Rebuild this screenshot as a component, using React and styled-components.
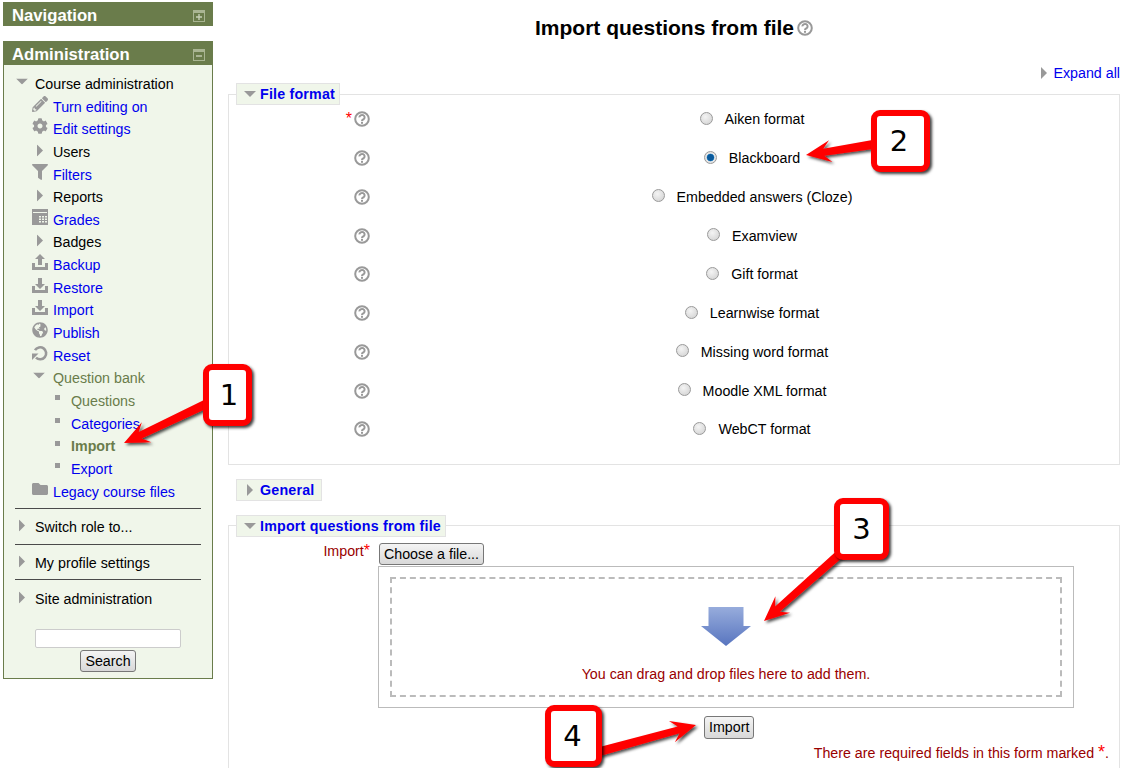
import { styled, createGlobalStyle } from 'styled-components';
import { FaCog, FaFilter, FaFolder, FaGlobeAmericas, FaPencilAlt } from 'react-icons/fa';

const GlobalStyle = createGlobalStyle`
  html, body {
    margin: 0;
    padding: 0;
    background: #fff;
    overflow: hidden;
  }
  body {
    font-family: "Liberation Sans", Arial, sans-serif;
    font-size: 14.25px;
    color: #000;
  }
`;

const Page = styled.div`
  position: relative;
  display: flex;
  align-items: flex-start;
  width: 1122px;
  height: 768px;
  overflow: hidden;
`;

const Sidebar = styled.aside`
  flex: none;
  width: 210px;
  margin: 2px 0 0 3px;
`;

const Block = styled.section`
  margin-bottom: 15px;
`;

const BlockHeader = styled.h2`
  box-sizing: border-box;
  display: flex;
  align-items: center;
  justify-content: space-between;
  height: 24px;
  margin: 0;
  padding: 4px 8px 0 9px;
  background: #6a7c4b;
  color: #fff;
  font-size: 16.7px;
  font-weight: bold;
`;

const BoxIcon = styled.svg`
  width: 12px;
  height: 12px;
`;

const BlockBody = styled.div`
  box-sizing: border-box;
  height: 614px;
  padding: 7.7px 11px 0 11px;
  background: #f0f6ea;
  border: 1px solid #6a7c4b;
  border-top: none;
`;

const Row = styled.div`
  box-sizing: border-box;
  display: flex;
  align-items: center;
  height: 22.65px;
  padding-left: ${({ $indent }) => $indent}px;
  padding-bottom: ${({ $raise }) => $raise || 0}px;
  color: ${({ $muted }) => ($muted ? '#6a7c4b' : '#000')};
  font-weight: ${({ $bold }) => ($bold ? 'bold' : 'normal')};
  white-space: nowrap;
`;

const IconSlot = styled.span`
  flex: none;
  display: flex;
  box-sizing: border-box;
  width: ${({ $width }) => $width}px;
  padding-left: ${({ $pad }) => $pad || 0}px;
  color: #999;
  transform: translateY(${({ $lift }) => -($lift ?? 3)}px);
`;

const TreeLink = styled.a`
  color: #0000ee;
  text-decoration: none;
`;

const Divider = styled.hr`
  height: 1px;
  margin: 4.7px 0 7.65px;
  border: none;
  background: #4a4a4a;
`;

const SearchForm = styled.form`
  display: flex;
  flex-direction: column;
  align-items: center;
  gap: 2px;
  margin-top: 18px;
`;

const SearchInput = styled.input`
  box-sizing: border-box;
  width: 146px;
  height: 19px;
  background: #fff;
  border: 1px solid #ccc;
  border-radius: 2px;
`;

const Button = styled.button`
  box-sizing: border-box;
  height: ${({ $height }) => $height || 22}px;
  padding: 0 4px;
  background: linear-gradient(#f4f4f4, #d8d8d8);
  border: 1px solid #777;
  border-radius: 3px;
  color: #000;
  font-family: inherit;
  font-size: 14.25px;
`;

const Main = styled.main`
  flex: none;
  width: 892px;
  margin-left: 15px;
`;

const Title = styled.h1`
  display: flex;
  align-items: center;
  justify-content: center;
  gap: 3px;
  height: 26px;
  margin: 15px 0 0;
  font-size: 21px;
  font-weight: bold;
`;

const ExpandRow = styled.div`
  display: flex;
  align-items: center;
  justify-content: flex-end;
  gap: 6px;
  height: 18px;
  margin-top: 23px;
`;

const Fieldset = styled.fieldset`
  margin: ${({ $top }) => $top}px 0 0;
  padding: 0;
  min-width: 0;
  border: 1px solid #e3e3e3;
  border-bottom: ${({ $open }) => ($open ? '1px solid #e3e3e3' : 'none')};
`;

const Legend = styled.legend`
  display: flex;
  align-items: center;
  box-sizing: border-box;
  height: 22px;
  margin-left: 7px;
  padding: 0 4px 0 7px;
  background: #f0f6ea;
  border: 1px solid #e3e3e3;
  color: #0000ee;
  font-size: 14.25px;
  font-weight: bold;
  letter-spacing: 0.2px;
`;

const LegendIcon = styled.span`
  display: flex;
  box-sizing: border-box;
  width: 16px;
  padding-left: ${({ $pad }) => $pad || 0}px;
`;

const GeneralLegend = styled(Legend)`
  margin: 0;
  padding-right: 7px;
`;

const GeneralBar = styled.div`
  display: flex;
  margin: 14px 0 0 8px;
`;

const FormatList = styled.div`
  margin-top: -5px;
  padding-bottom: 15px;
`;

const FormatRow = styled.div`
  display: grid;
  grid-template-columns: 141px 1fr;
  align-items: center;
  height: 38.75px;
`;

const HelpCell = styled.div`
  display: flex;
  align-items: center;
  justify-content: flex-end;
  gap: 2px;
`;

const RedStar = styled.span`
  color: #f00;
  font-size: ${({ $size }) => $size || 16}px;
  line-height: 1;
`;

const OptionCell = styled.label`
  display: flex;
  align-items: center;
  justify-content: center;
  gap: 12px;
  padding-left: 15px;
`;

const Radio = styled.span`
  flex: none;
  box-sizing: border-box;
  width: 13px;
  height: 13px;
  margin-top: -2px;
  border: 1px solid #9a9a9a;
  border-radius: 50%;
  background: ${({ $checked }) =>
    $checked
      ? 'radial-gradient(circle at 50% 50%, #0a5a9c 0 3px, #3f8fc8 3.6px, #e8e8e8 4.2px, #d4d4d4 100%)'
      : 'radial-gradient(circle at 40% 35%, #f4f4f4, #cfcfcf)'};
`;

const ImportBody = styled.div`
  height: 300px;
`;

const FieldRow = styled.div`
  display: grid;
  grid-template-columns: 149px 696px;
`;

const FieldLabel = styled.div`
  display: flex;
  justify-content: flex-end;
  padding: 6px 8px 0 0;
  color: #990000;
`;

const ChooseButton = styled(Button)`
  display: block;
  width: 105px;
  margin: 6px 0 1px 1px;
  padding: 0;
`;

const PickerBox = styled.div`
  box-sizing: border-box;
  height: 142px;
  padding: 10px 11px;
  border: 1px solid #bbb;
`;

const DropZone = styled.div`
  box-sizing: border-box;
  display: flex;
  flex-direction: column;
  align-items: center;
  height: 120px;
  padding-top: 28px;
  border: 2px dashed #bbb;
`;

const DropText = styled.div`
  margin-top: 20px;
  color: #990000;
`;

const SubmitRow = styled.div`
  display: flex;
  margin: 8px 0 0 475px;
`;

const RequiredNote = styled.div`
  margin: 4px 10px 0 0;
  color: #990000;
  text-align: right;
`;

const Overlay = styled.svg`
  position: absolute;
  top: 0;
  left: 0;
  width: 1122px;
  height: 768px;
  pointer-events: none;
`;

const Callout = styled.div`
  position: absolute;
  left: ${({ $x }) => $x}px;
  top: ${({ $y }) => $y}px;
  box-sizing: border-box;
  display: flex;
  align-items: center;
  justify-content: center;
  width: ${({ $w }) => $w}px;
  height: 62px;
  padding: 0 ${({ $right }) => $right || 0}px 0 ${({ $left }) => $left || 0}px;
  background: #fff;
  border: 6px solid #f00;
  border-radius: 9px;
  box-shadow: 2px 2px 3px rgba(0, 0, 0, 0.75);
  color: #000;
  font-family: "DejaVu Sans", sans-serif;
  font-size: 29px;
`;

// small grey glyphs that the icon packs don't have in the moodle shape
const GradesIcon = () => (
  <svg width="16" height="16" viewBox="0 0 16 16" fill="#999">
    <path d="M0 0h16v16H0z" />
    <path d="M1 3h14v1H1zM7 7h2v1.5H7zM10 7h2v1.5h-2zM13 7h2v1.5h-2zM7 9.5h2V11H7zM10 9.5h2V11h-2zM13 9.5h2V11h-2zM7 12h2v1.5H7zM10 12h2v1.5h-2zM13 12h2v1.5h-2z" fill="#f0f6ea" />
  </svg>
);

const TrayIcon = ({ up }) => (
  <svg width="16" height="16" viewBox="0 0 16 16" fill="#999">
    <path d="M0 9h3v4h10V9h3v7H0z" />
    {up ? <path d="M8 0l5 5H10v6H6V5H3z" /> : <path d="M6 1h4v6h3l-5 5-5-5h3z" />}
  </svg>
);

const ResetIcon = () => (
  <svg width="16" height="16" viewBox="0 0 16 16" fill="none" stroke="#999" strokeWidth="2.6">
    <path d="M3 5.2A6 6 0 1 1 4 12.6" />
    <path d="M0 8.5h6.5L0 15z" fill="#999" stroke="none" />
  </svg>
);

const CollapsedArrow = () => (
  <svg width="6" height="12" viewBox="0 0 6 12" fill="#999">
    <path d="M0 0l6 6-6 6z" />
  </svg>
);

const OpenArrow = () => (
  <svg width="12" height="6" viewBox="0 0 12 6" fill="#999">
    <path d="M0 0h12L6 6z" />
  </svg>
);

const Bullet = () => (
  <svg width="5" height="5" viewBox="0 0 5 5" fill="#999">
    <path d="M0 0h5v5H0z" />
  </svg>
);

const HelpIcon = () => (
  <svg width="16" height="16" viewBox="0 0 16 16">
    <circle cx="8" cy="8" r="6.8" fill="#fff" stroke="#999" strokeWidth="2" />
    <path d="M5.4 6.4A2.6 2.4 0 1 1 9.5 8.3C8.5 8.9 8 9.1 8 10" fill="none" stroke="#999" strokeWidth="2" />
    <rect x="7" y="10.8" width="2" height="2" fill="#999" />
  </svg>
);

const BlockToggle = ({ plus }) => (
  <BoxIcon viewBox="0 0 12 12">
    <path d="M0 0h12v12H0z" fill="#a9b592" />
    <path d="M1 3h10v8H1z" fill="#6a7c4b" />
    <path d={plus ? 'M3 6.3h6v1.4H3zM5.3 4h1.4v6H5.3z' : 'M3 6.3h6v1.4H3z'} fill="#c6cfb6" />
  </BoxIcon>
);

const UploadArrow = () => (
  <svg width="50" height="39" viewBox="0 0 50 39">
    <defs>
      <linearGradient id="dropArrow" x1="0" y1="0" x2="0" y2="1">
        <stop offset="0" stopColor="#97acdc" />
        <stop offset="1" stopColor="#5875bf" />
      </linearGradient>
    </defs>
    <path d="M7.5 0h35v19H50L25 39 0 19h7.5z" fill="url(#dropArrow)" />
  </svg>
);

const arrowPoints = ([tx, ty], [hx, hy]) => {
  const len = Math.hypot(hx - tx, hy - ty);
  const ux = (hx - tx) / len;
  const uy = (hy - ty) / len;
  const nx = -uy;
  const ny = ux;
  const at = (along, side) => `${hx - ux * along + nx * side},${hy - uy * along + ny * side}`;
  return [
    `${tx + nx * 4.5},${ty + ny * 4.5}`,
    at(18, 3.5),
    at(25, 11),
    at(0, 0),
    at(25, -11),
    at(18, -3.5),
    `${tx - nx * 4.5},${ty - ny * 4.5}`,
  ].join(' ');
};

const ARROWS = [
  { from: [208, 403], to: [124, 443] },
  { from: [876, 144], to: [806, 155] },
  { from: [842, 552], to: [764, 621] },
  { from: [598, 752], to: [696, 725] },
];

const CALLOUTS = [
  { n: 1, x: 203, y: 364, w: 49, left: 3 },
  { n: 2, x: 871, y: 110, w: 59, right: 3 },
  { n: 3, x: 834, y: 498, w: 55 },
  { n: 4, x: 545, y: 705, w: 57, right: 2 },
];

const TREE = [
  { label: 'Course administration', indent: 1, width: 19, lift: 2.5, icon: <OpenArrow /> },
  { label: 'Turn editing on', link: true, indent: 17, width: 21, icon: <FaPencilAlt size={16} /> },
  { label: 'Edit settings', link: true, indent: 17, width: 21, icon: <FaCog size={16} /> },
  { label: 'Users', indent: 17, width: 21, pad: 5, lift: 1.5, icon: <CollapsedArrow /> },
  { label: 'Filters', link: true, indent: 17, width: 21, icon: <FaFilter size={16} /> },
  { label: 'Reports', indent: 17, width: 21, pad: 5, lift: 1.5, icon: <CollapsedArrow /> },
  { label: 'Grades', link: true, indent: 17, width: 21, icon: <GradesIcon /> },
  { label: 'Badges', indent: 17, width: 21, pad: 5, lift: 1.5, icon: <CollapsedArrow /> },
  { label: 'Backup', link: true, indent: 17, width: 21, icon: <TrayIcon up /> },
  { label: 'Restore', link: true, indent: 17, width: 21, icon: <TrayIcon /> },
  { label: 'Import', link: true, indent: 17, width: 21, icon: <TrayIcon /> },
  { label: 'Publish', link: true, indent: 17, width: 21, icon: <FaGlobeAmericas size={16} /> },
  { label: 'Reset', link: true, indent: 17, width: 21, icon: <ResetIcon /> },
  { label: 'Question bank', muted: true, indent: 17, width: 21, pad: 1, lift: 2.5, icon: <OpenArrow /> },
  { label: 'Questions', muted: true, indent: 40, width: 16, icon: <Bullet /> },
  { label: 'Categories', link: true, indent: 40, width: 16, icon: <Bullet /> },
  { label: 'Import', muted: true, bold: true, indent: 40, width: 16, icon: <Bullet /> },
  { label: 'Export', link: true, indent: 40, width: 16, icon: <Bullet /> },
  { label: 'Legacy course files', link: true, indent: 17, width: 21, icon: <FaFolder size={16} /> },
];

const BRANCHES = ['Switch role to...', 'My profile settings', 'Site administration'];

const FORMATS = [
  'Aiken format',
  'Blackboard',
  'Embedded answers (Cloze)',
  'Examview',
  'Gift format',
  'Learnwise format',
  'Missing word format',
  'Moodle XML format',
  'WebCT format',
];

export default function App() {
  return (
    <Page>
      <GlobalStyle />
      <Sidebar>
        <Block>
          <BlockHeader>
            Navigation
            <BlockToggle plus />
          </BlockHeader>
        </Block>
        <Block>
          <BlockHeader>
            Administration
            <BlockToggle />
          </BlockHeader>
          <BlockBody>
            {TREE.map((item, i) => (
              <Row key={i} $indent={item.indent} $muted={item.muted} $bold={item.bold}>
                <IconSlot $width={item.width} $pad={item.pad} $lift={item.lift}>{item.icon}</IconSlot>
                {item.link ? <TreeLink href="#">{item.label}</TreeLink> : item.label}
              </Row>
            ))}
            {BRANCHES.map((label) => (
              <div key={label}>
                <Divider />
                <Row $indent={4} $raise={1}>
                  <IconSlot $width={16} $lift={1.5}>
                    <CollapsedArrow />
                  </IconSlot>
                  {label}
                </Row>
              </div>
            ))}
            <SearchForm>
              <SearchInput />
              <Button type="button">Search</Button>
            </SearchForm>
          </BlockBody>
        </Block>
      </Sidebar>

      <Main>
        <Title>
          Import questions from file
          <HelpIcon />
        </Title>
        <ExpandRow>
          <CollapsedArrow />
          <TreeLink href="#">Expand all</TreeLink>
        </ExpandRow>

        <Fieldset $top={1} $open>
          <Legend>
            <LegendIcon>
              <OpenArrow />
            </LegendIcon>
            File format
          </Legend>
          <FormatList>
            {FORMATS.map((name, i) => (
              <FormatRow key={name}>
                <HelpCell>
                  {i === 0 && <RedStar>*</RedStar>}
                  <HelpIcon />
                </HelpCell>
                <OptionCell>
                  <Radio $checked={name === 'Blackboard'} />
                  {name}
                </OptionCell>
              </FormatRow>
            ))}
          </FormatList>
        </Fieldset>

        <GeneralBar>
          <GeneralLegend as="div">
            <LegendIcon $pad={3}>
              <CollapsedArrow />
            </LegendIcon>
            General
          </GeneralLegend>
        </GeneralBar>

        <Fieldset $top={14}>
          <Legend>
            <LegendIcon>
              <OpenArrow />
            </LegendIcon>
            Import questions from file
          </Legend>
          <ImportBody>
            <FieldRow>
              <FieldLabel>
                Import<RedStar>*</RedStar>
              </FieldLabel>
              <div>
                <ChooseButton type="button">Choose a file...</ChooseButton>
                <PickerBox>
                  <DropZone>
                    <UploadArrow />
                    <DropText>You can drag and drop files here to add them.</DropText>
                  </DropZone>
                </PickerBox>
              </div>
            </FieldRow>
            <SubmitRow>
              <Button type="button" $height={23}>Import</Button>
            </SubmitRow>
            <RequiredNote>
              There are required fields in this form marked <RedStar $size={18}>*</RedStar>.
            </RequiredNote>
          </ImportBody>
        </Fieldset>
      </Main>

      <Overlay viewBox="0 0 1122 768">
        <defs>
          <filter id="arrowShadow" x="-20%" y="-20%" width="140%" height="140%">
            <feDropShadow dx="2" dy="2" stdDeviation="1.6" floodColor="#000" floodOpacity="0.7" />
          </filter>
        </defs>
        {ARROWS.map((a, i) => (
          <polygon key={i} points={arrowPoints(a.from, a.to)} fill="#f00" filter="url(#arrowShadow)" />
        ))}
      </Overlay>
      {CALLOUTS.map((c) => (
        <Callout key={c.n} $x={c.x} $y={c.y} $w={c.w} $left={c.left} $right={c.right}>
          {c.n}
        </Callout>
      ))}
    </Page>
  );
}
